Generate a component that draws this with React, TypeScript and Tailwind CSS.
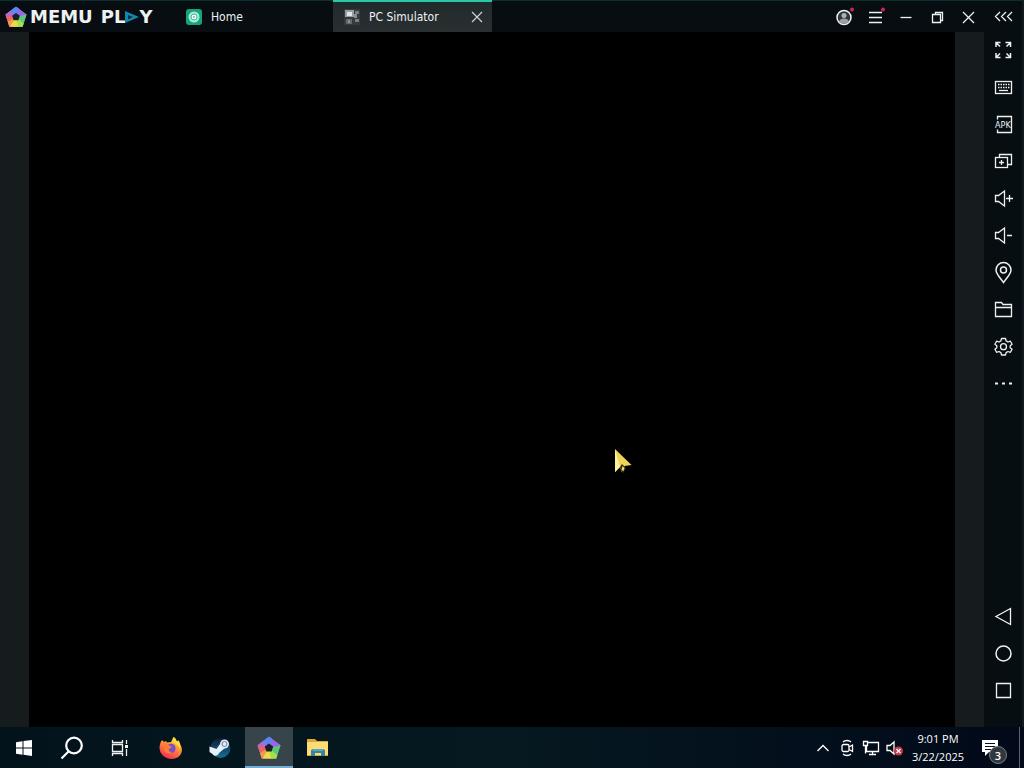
import React from "react";

type IconProps = { className?: string; children: React.ReactNode };

function Icon({ className = "size-5", children }: IconProps) {
  return (
    <svg viewBox="0 0 20 20" className={className} fill="none" stroke="currentColor" strokeWidth="1.3" aria-hidden="true">
      {children}
    </svg>
  );
}

function MemuMark({ className }: { className: string }) {
  return (
    <svg viewBox="0 0 24 24" className={className} aria-hidden="true">
      <path d="M12 .8.5 9.2l4.300 13.400h14.400L23.500 9.200z" fill="#7b83d8" />
      <path d="M12 .8 3 7.300 12 12l4-8.500z" fill="#4f8ff2" />
      <path d="m12 .8 11.500 8.400L12 12l-2-9.500z" fill="#9c64ec" />
      <path d="M12 .8 8.500 3.400 13 9l2-6z" fill="#5b86f2" />
      <path d="M.5 9.200 6 5.200 12 12l-9.700 2.800z" fill="#b866cb" />
      <path d="M1 10.500 12 12 7 22.600H4.800z" fill="#f0625f" />
      <path d="M3 17 12 12l4 10.600H4.800z" fill="#f09a50" />
      <path d="M7 20 12 12l5 10.600H6z" fill="#ecdc48" />
      <path d="m23.500 9.200-4.300 13.400H15L12 12z" fill="#5bc878" />
      <path d="M12 12l8.300 7.200-1.100 3.400H14z" fill="#a5df49" />
      <path d="M12 7.500 16.200 10.500l-1.600 5H9.400l-1.600-5z" fill="#152027" />
    </svg>
  );
}

const tools: { label: string; icon: React.ReactNode }[] = [
  {
    label: "Full screen",
    icon: (
      <Icon>
        <path d="M3 7V2.500h4.500M3 2.500l4 4M12.500 2.500H17.500V7M17.500 2.500l-4 4M3 13v4.500h4.500M3 17.500l4-4M17.500 13v4.500h-5M17.500 17.500l-4-4" strokeWidth="1.500" />
      </Icon>
    ),
  },
  {
    label: "Keyboard mapping",
    icon: (
      <Icon>
        <rect x="2.500" y="4.500" width="16" height="12" />
        <path d="M5 7.500h11.500M5 10.500h11.500" strokeDasharray="1.500 1" />
        <path d="M6 13.500h9" />
      </Icon>
    ),
  },
  {
    label: "Install APK",
    icon: (
      <Icon>
        <path d="M4.500 5.500v-3h14v16h-14v-3" />
        <text x="2" y="14" fill="currentColor" stroke="none" className="font-['DejaVu_Sans_Condensed'] text-[9px]">
          APK
        </text>
      </Icon>
    ),
  },
  {
    label: "Multiple instances",
    icon: (
      <Icon>
        <path d="M6.500 6.500v-3h12v10h-4" />
        <rect x="2.500" y="6.500" width="12" height="10" />
        <path d="M6 11.500h5M8.500 9v5" />
      </Icon>
    ),
  },
  {
    label: "Volume up",
    icon: (
      <Icon>
        <path d="M2.500 7.500h3L11.500 3v15l-6-4.500h-3zM13 10.500h7M16.500 7v7" />
      </Icon>
    ),
  },
  {
    label: "Volume down",
    icon: (
      <Icon>
        <path d="M2.500 7.500h3L11.500 3v15l-6-4.500h-3zM14 10.500h5" />
      </Icon>
    ),
  },
  {
    label: "Location",
    icon: (
      <svg viewBox="0 0 20 24" className="h-6 w-5" fill="none" stroke="currentColor" strokeWidth="1.500" aria-hidden="true">
        <path d="M10.500 22.500C8 19 3 14 3 10a7.500 7.500 0 0 1 15 0c0 4-5 9-7.500 12.500z" />
        <circle cx="10.500" cy="10" r="3" />
      </svg>
    ),
  },
  {
    label: "Shared folder",
    icon: (
      <Icon>
        <path d="M2.500 17.500v-14h6l1.500 2h8.500v12zM2.500 8.500h16" />
      </Icon>
    ),
  },
  {
    label: "Settings",
    icon: (
      <Icon>
        <path d="M8.500 2.500h4l.6 2.400 1.900 1.100 2.400-.8 1.700 3-1.900 1.500v2l1.900 1.600-1.700 3-2.400-.8-1.900 1.100-.6 2.400h-4l-.6-2.400L6 15.500l-2.400.8-1.700-3 1.900-1.600v-2L1.900 8.200l1.700-3 2.400.8 1.900-1.100z" strokeLinejoin="round" />
        <circle cx="10.500" cy="10.700" r="3" />
      </Icon>
    ),
  },
  {
    label: "More",
    icon: (
      <Icon>
        <path d="M2 10.500h3M9 10.500h3M16 10.500h3" strokeWidth="2" />
      </Icon>
    ),
  },
];

const navigation: { label: string; icon: React.ReactNode }[] = [
  { label: "Back", icon: <Icon><path d="M17.500 2.500v16L3 10.500z" /></Icon> },
  { label: "Android home", icon: <Icon><circle cx="10.500" cy="10.500" r="7.500" strokeWidth="1.500" /></Icon> },
  { label: "Recent apps", icon: <Icon><path d="M3.500 3.500h14v14h-14z" /></Icon> },
];

function SideButton({ label, icon }: { label: string; icon: React.ReactNode }) {
  return (
    <button type="button" aria-label={label} className="flex h-[37px] w-full items-center justify-center hover:bg-white/10">
      {icon}
    </button>
  );
}

function TitleButton({ label, children }: { label: string; children: React.ReactNode }) {
  return (
    <button type="button" aria-label={label} className="flex w-[31px] items-center justify-center hover:bg-white/10">
      {children}
    </button>
  );
}

function TaskButton({ label, active = false, children }: { label: string; active?: boolean; children: React.ReactNode }) {
  return (
    <button
      type="button"
      aria-label={label}
      className={
        active
          ? "flex w-12 items-center justify-center border-b-2 border-[#72aed6] bg-[#374449] pt-0.5"
          : "flex w-12 items-center justify-center hover:bg-white/10"
      }
    >
      {children}
    </button>
  );
}

function TitleBar() {
  return (
    <header className="flex h-8 shrink-0 border-t border-[#07302e] bg-[#070d11]">
      <div className="flex w-[173px] items-center pl-[5px]">
        <MemuMark className="size-[22px]" />
        <div className="ml-[3px] flex items-center font-['DejaVu_Sans'] text-[18px] leading-none font-bold">
          <span>MEMU</span>
          <span className="ml-2">PL</span>
          <svg viewBox="0 0 14 12" className="h-3 w-3.5" role="img" aria-label="A">
            <path d="M0 0 14 6 0 12z" fill="#1686ae" />
            <path d="M3 4v4.500L8 6z" fill="#092e44" />
          </svg>
          <span>Y</span>
        </div>
      </div>
      <nav className="flex font-['DejaVu_Sans_Condensed','DejaVu_Sans',sans-serif] text-[12px]">
        <button type="button" className="flex w-40 items-center gap-[9px] px-[13px]">
          <svg viewBox="0 0 16 16" className="size-4" aria-hidden="true">
            <rect width="16" height="16" rx="3" fill="#17a37d" />
            <circle cx="8" cy="8" r="5.500" fill="#a9eadb" />
            <circle cx="8" cy="8" r="3" fill="#f2fffb" stroke="#38b897" />
            <circle cx="8" cy="8" r="1" fill="#61c8ae" />
          </svg>
          Home
        </button>
        <div className="-mt-px flex w-[159px] items-center gap-[9px] border-t-2 border-[#29c7a6] bg-linear-to-b from-[#202b2b] to-[#2a2f31] px-[11px]">
          <svg viewBox="0 0 16 16" className="size-4" aria-hidden="true">
            <path d="M0 0h16v16H0z" fill="#353b3d" />
            <path d="M1 1h9v7H1z" fill="#999e9f" />
            <path d="M3 3h5v4H3z" fill="#e3e6e6" />
            <path d="M11 2h4v3h-4zM11 10h4v3h-4z" fill="#777d80" />
            <path d="M2 10h6v5H2z" fill="#63696b" />
            <path d="M4 11h2v3H4zM10 5h3v4h-3z" fill="#8a9091" />
          </svg>
          <span className="flex-1 whitespace-nowrap">PC Simulator</span>
          <button type="button" aria-label="Close tab" className="-mr-0.5">
            <svg viewBox="0 0 12 12" className="size-3" stroke="#d5d8d9" strokeWidth="1.100" aria-hidden="true">
              <path d="m1 1 10 10M11 1 1 11" />
            </svg>
          </button>
        </div>
      </nav>
      <div className="mr-px ml-auto flex">
        <TitleButton label="Account">
          <Icon>
            <circle cx="10" cy="10.500" r="7" fill="#30363c" strokeWidth="1.500" />
            <circle cx="10" cy="8.500" r="2.500" fill="#aeb2b5" stroke="none" />
            <path d="M5 14.500c1-4 9-4 10 0-2 3-8 3-10 0z" fill="#9ca0a4" stroke="none" />
            <circle cx="18" cy="2.500" r="2" fill="#c52750" stroke="none" />
          </Icon>
        </TitleButton>
        <TitleButton label="Menu">
          <Icon>
            <path d="M4 5.500h13M4 10.500h13M4 15.500h13" />
            <circle cx="18" cy="2.500" r="2" fill="#c52750" stroke="none" />
          </Icon>
        </TitleButton>
        <TitleButton label="Minimize"><Icon><path d="M4.500 10.500h11" /></Icon></TitleButton>
        <TitleButton label="Restore">
          <Icon><path d="M5.500 7.500h8v8h-8zM8.500 7V5.500h7v8H14" /></Icon>
        </TitleButton>
        <TitleButton label="Close"><Icon><path d="m5 5 11 11M16 5 5 16" /></Icon></TitleButton>
      </div>
    </header>
  );
}

function Taskbar() {
  return (
    <footer className="flex h-[41px] shrink-0 bg-linear-to-r from-[#02131b] via-[#061820] to-[#020919]">
      <TaskButton label="Start">
        <svg viewBox="0 0 16 16" className="size-4" fill="white" aria-hidden="true">
          <path d="m0 2.200 6.500-.9v6.200H0zM7.500 1.100 16 0v7.500H7.500zM0 8.500h6.500v6.200L0 13.800zM7.500 8.500H16V16l-8.500-1.200z" />
        </svg>
      </TaskButton>
      <TaskButton label="Search">
        <svg viewBox="0 0 24 24" className="size-6" fill="none" stroke="white" strokeWidth="2.200" aria-hidden="true">
          <circle cx="14" cy="9.500" r="7.800" /><path d="m8.500 15.500-7 7" />
        </svg>
      </TaskButton>
      <TaskButton label="Task view">
        <Icon>
          <path d="M2.500 2v2.500h10V2M2.500 18v-2.500h10V18M2.500 6.500h10v7h-10zM16.500 2v4M16.500 11v7" />
          <path d="M15 7h3v3h-3z" fill="currentColor" stroke="none" />
        </Icon>
      </TaskButton>
      <div className="ml-[3px] flex gap-px">
        <TaskButton label="Firefox">
          <svg viewBox="0 0 24 24" className="size-6" aria-hidden="true">
            <defs>
              <linearGradient id="fox" x1=".8" y1="0" x2=".3" y2="1">
                <stop stopColor="#ffe24a" /><stop offset=".45" stopColor="#ff9138" /><stop offset="1" stopColor="#ef2855" />
              </linearGradient>
            </defs>
            <path d="M1.500 6.500 3 4l2 2 2-1 1 1.500 4-.5 2.500-5c2 1 3 3 3 4.500l2-1 2 4.500c4 7-1 14-9 14S-2 16 1.500 6.500z" fill="url(#fox)" />
            <path d="M8 9.500c2-2.500 8-2.500 8.500 2 .5 4-2 5.500-4.500 5.500-3.500 0-5-2.500-4-5z" fill="#7950c7" />
            <path d="M4 7c4 0 5 1 7 3l2 1-3 2c-1 2 1 3 3 3-3 3-8 1-8-3z" fill="#ff7c35" />
            <path d="M14.500 1c2 1 3 3 3 4.500l2-1c2 3 2 5 1.500 9-1-4-4-5-6-6-2-1-1.500-4-.5-6.500z" fill="#ffd83f" />
          </svg>
        </TaskButton>
        <TaskButton label="Steam">
          <svg viewBox="0 0 24 24" className="size-6" aria-hidden="true">
            <defs>
              <linearGradient id="steam" x1="0" y1="0" x2="0" y2="1">
                <stop stopColor="#101b35" /><stop offset="1" stopColor="#137099" />
              </linearGradient>
            </defs>
            <circle cx="12.500" cy="12" r="10" fill="url(#steam)" />
            <path d="m1.500 10.500 7 2.500 3.500-5 5 4-6 5c-1 3-5 4-6.500 1L1.500 16z" fill="#e9f1f7" />
            <circle cx="16.500" cy="8" r="4.500" fill="#dfe8f5" />
            <circle cx="16.500" cy="8" r="2.500" fill="#dfe8f5" stroke="#70819d" />
          </svg>
        </TaskButton>
        <TaskButton label="MEmu Play" active><MemuMark className="size-6" /></TaskButton>
        <TaskButton label="File Explorer">
          <svg viewBox="0 0 24 24" className="size-6" aria-hidden="true">
            <path d="M1 3h8l2 2h11v15H1z" fill="#dca737" />
            <path d="M1 6h21v13H1z" fill="#ffdc73" />
            <path d="M5 20v-6l2-1h10l2 1v6h-4v-3H9v3z" fill="#3585a8" />
            <path d="M7 13h10v2H7z" fill="#5aa5bd" />
          </svg>
        </TaskButton>
      </div>
      <div className="ml-auto flex text-white">
        <button type="button" aria-label="Show hidden icons" className="flex w-6 items-center justify-center"><Icon><path d="m4.500 13 5.500-5.500 5.500 5.500" /></Icon></button>
        <button type="button" aria-label="Meet now" className="flex w-6 items-center justify-center">
          <Icon>
            <rect x="5" y="6.500" width="7" height="7" rx="1.500" />
            <path d="m12 9 3.500-2v6.500L12 11.500M6 4c2-2 6-2 8 0M6 16c2 2 6 2 8 0" />
          </Icon>
        </button>
        <button type="button" aria-label="Network" className="flex w-6 items-center justify-center">
          <Icon>
            <path d="M6.500 4.500h11v9h-12V8M2.500 3.500h4v4h-4zM4.500 7.500v8M11.500 13.500v3M8 16.500h7" />
          </Icon>
        </button>
        <button type="button" aria-label="Volume muted" className="flex w-6 items-center justify-center">
          <Icon>
            <path d="M2 7.500h3l4-3.500v12l-4-3.500H2z" />
            <circle cx="13.500" cy="13" r="4.500" fill="#cb3545" stroke="none" />
            <path d="m11.500 11 4 4M15.500 11l-4 4" />
          </Icon>
        </button>
        <button type="button" className="flex w-[62px] flex-col items-center justify-center font-['Open_Sans','Noto_Sans',sans-serif] text-[11px] leading-[18px]">
          <time>9:01 PM</time>
          <time>3/22/2025</time>
        </button>
        <button type="button" aria-label="Notifications, 3 new" className="relative flex w-[50px] items-center justify-center">
          <svg viewBox="0 0 18 18" className="mr-2 size-[18px]" aria-hidden="true">
            <path d="M1 1h16v12H8l-4 4v-4H1z" fill="white" />
            <path d="M4 4.500h10M4 7.500h10M4 10.500h6" stroke="#07101f" />
          </svg>
          <span className="absolute right-3 bottom-1 flex size-[18px] items-center justify-center rounded-full border border-[#777d83] bg-[#30373e] font-['Open_Sans',sans-serif] text-[11px] leading-none font-semibold">3</span>
        </button>
        <button type="button" aria-label="Show desktop" className="w-[5px] border-l border-[#59616b]" />
      </div>
    </footer>
  );
}

export default function App() {
  return (
    <div className="flex h-screen flex-col overflow-hidden bg-black text-[#eef1f2]">
      <div className="flex min-h-0 flex-1">
        <div className="flex min-w-0 flex-1 flex-col">
          <TitleBar />
          <main className="flex flex-1 bg-[#161b1e] px-[29px]">
            <div className="relative flex-1 bg-black">
              <svg viewBox="0 0 20 26" className="absolute top-[60%] left-[63%] h-[26px] w-5" aria-hidden="true">
                <path d="M3 0v23l5-5 1.500 5 3-2V17l7-1z" fill="#efd35b" />
                <path d="M3 0v23l5-5z" fill="#fff09a" />
                <path d="m8 18 2-3 4 4-2 4-2 1z" fill="#302b12" />
                <path d="m10.500 17 2 2-1 3-2-1z" fill="#f5dd68" />
              </svg>
            </div>
          </main>
        </div>
        <aside className="flex w-10 shrink-0 flex-col border-t border-r-2 border-t-[#07302e] border-r-[#111a20] bg-[#070e12] pb-[19px]">
          <button type="button" aria-label="Collapse toolbar" className="flex h-[30px] items-center justify-center">
            <Icon><path d="M7 6 2.500 10.500 7 15M13 6l-4.500 4.500L13 15M19 6l-4.500 4.500L19 15" /></Icon>
          </button>
          {tools.map((tool) => <SideButton key={tool.label} {...tool} />)}
          <div className="mt-auto">
            {navigation.map((item) => <SideButton key={item.label} {...item} />)}
          </div>
        </aside>
      </div>
      <Taskbar />
    </div>
  );
}
